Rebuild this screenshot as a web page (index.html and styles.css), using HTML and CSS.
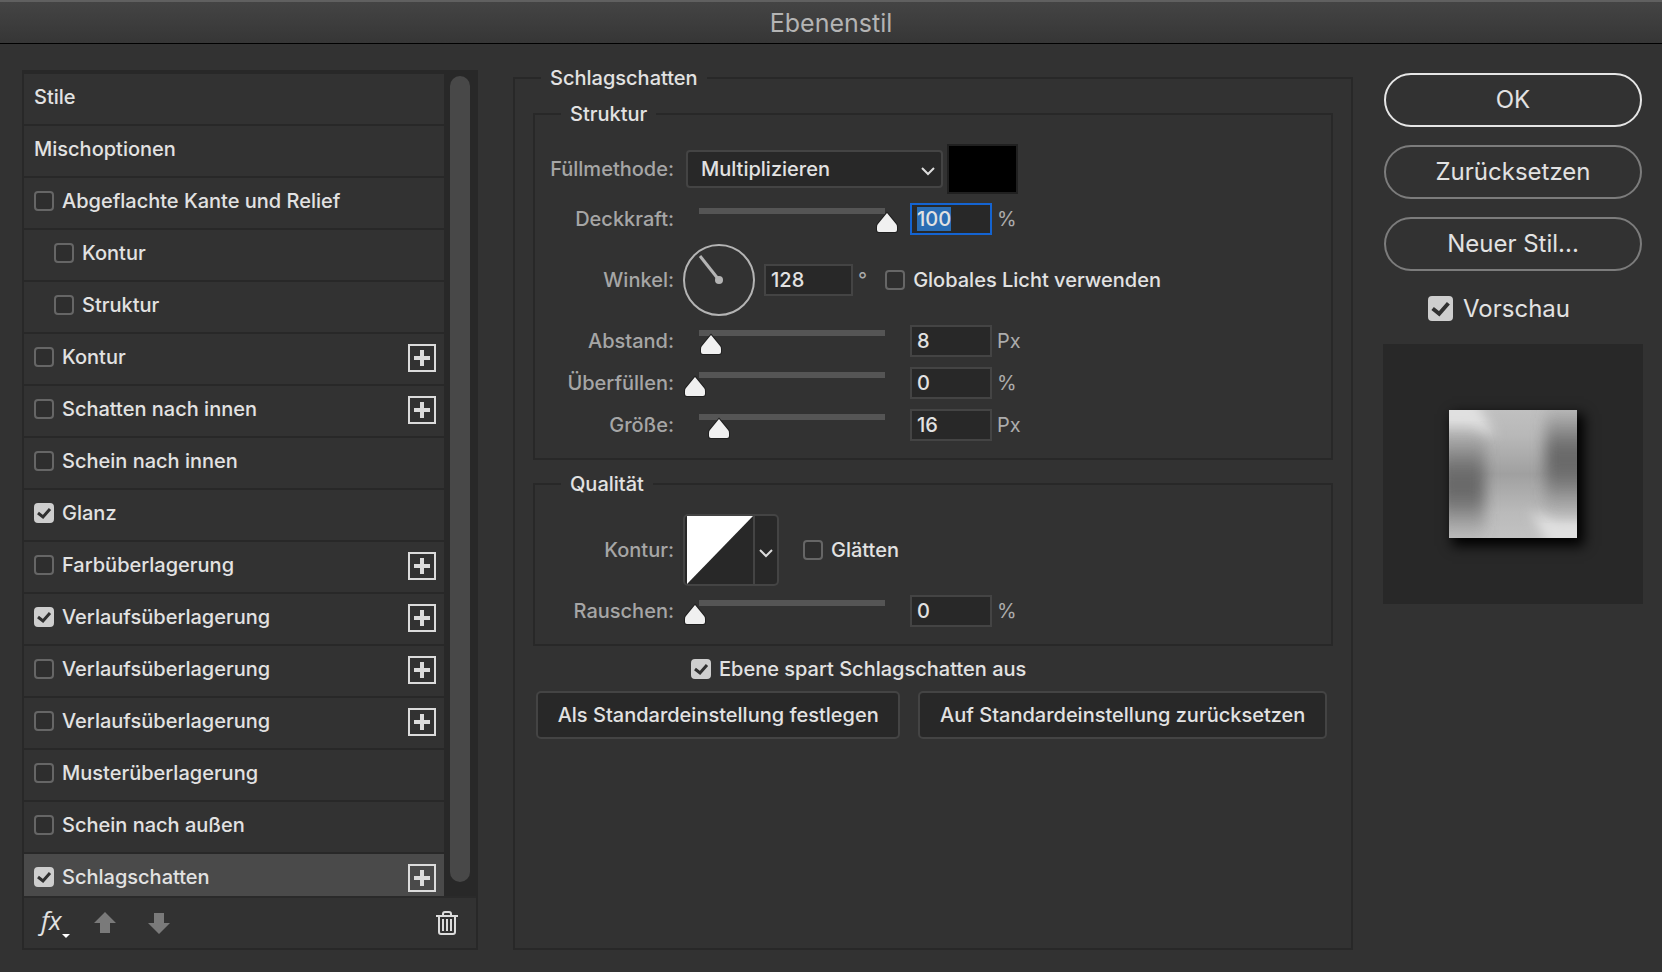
FILE: index.html
```html
<!DOCTYPE html>
<html lang="de">
<head>
    <meta charset="UTF-8">
    <meta name="viewport" content="width=device-width, initial-scale=1.0">
    <title>Ebenenstil</title>
    <link rel="stylesheet" href="styles.css">
</head>
<body>
    <header class="titlebar">
        <h1>Ebenenstil</h1>
    </header>

    <main class="dialog">
        <section class="styles-panel">
            <div class="styles-body">
                <ul class="style-list">
                    <li>Stile</li>
                    <li>Mischoptionen</li>
                    <li><label><input type="checkbox">Abgeflachte Kante und Relief</label></li>
                    <li class="sub"><label><input type="checkbox">Kontur</label></li>
                    <li class="sub"><label><input type="checkbox">Struktur</label></li>
                    <li><label><input type="checkbox">Kontur</label><button class="add-btn" aria-label="Kontur hinzufügen"></button></li>
                    <li><label><input type="checkbox">Schatten nach innen</label><button class="add-btn" aria-label="Schatten nach innen hinzufügen"></button></li>
                    <li><label><input type="checkbox">Schein nach innen</label></li>
                    <li><label><input type="checkbox" checked>Glanz</label></li>
                    <li><label><input type="checkbox">Farbüberlagerung</label><button class="add-btn" aria-label="Farbüberlagerung hinzufügen"></button></li>
                    <li><label><input type="checkbox" checked>Verlaufsüberlagerung</label><button class="add-btn" aria-label="Verlaufsüberlagerung hinzufügen"></button></li>
                    <li><label><input type="checkbox">Verlaufsüberlagerung</label><button class="add-btn" aria-label="Verlaufsüberlagerung hinzufügen"></button></li>
                    <li><label><input type="checkbox">Verlaufsüberlagerung</label><button class="add-btn" aria-label="Verlaufsüberlagerung hinzufügen"></button></li>
                    <li><label><input type="checkbox">Musterüberlagerung</label></li>
                    <li><label><input type="checkbox">Schein nach außen</label></li>
                    <li class="active"><label><input type="checkbox" checked>Schlagschatten</label><button class="add-btn" aria-label="Schlagschatten hinzufügen"></button></li>
                </ul>
                <div class="scrollbar"><div class="scroll-thumb"></div></div>
            </div>
            <div class="styles-footer">
                <button class="icon-btn fx-btn" aria-label="Effekte">
                    <span>fx</span>
                    <svg width="8" height="4" viewBox="0 0 8 4"><path d="M0 0h8L4 4z" fill="#fff"/></svg>
                </button>
                <button class="icon-btn" aria-label="Nach oben">
                    <svg width="22" height="22" viewBox="0 0 22 22">
                        <path d="M11 0L22 11H16V21H6V11H0z" fill="#7a7a7a"/>
                    </svg>
                </button>
                <button class="icon-btn" aria-label="Nach unten">
                    <svg width="22" height="22" viewBox="0 0 22 22">
                        <path d="M6 1H16V11H22L11 22L0 11H6z" fill="#7a7a7a"/>
                    </svg>
                </button>
                <button class="icon-btn trash-btn" aria-label="Löschen">
                    <svg width="22" height="24" viewBox="0 0 22 24" fill="none" stroke="#dcdcdc" stroke-width="2">
                        <path d="M0 5H22M7 5V3Q7 1 9 1H13Q15 1 15 3V5M3 5V21Q3 23 5 23H17Q19 23 19 21V5"/>
                        <path d="M7 8V20M11 8V20M15 8V20"/>
                    </svg>
                </button>
            </div>
        </section>

        <fieldset class="settings">
            <legend>Schlagschatten</legend>

            <fieldset class="group">
                <legend>Struktur</legend>
                <div class="row">
                    <label class="name" for="blend">Füllmethode:</label>
                    <select id="blend">
                        <option>Multiplizieren</option>
                        <option>Normal</option>
                    </select>
                    <button class="swatch" aria-label="Schattenfarbe"></button>
                </div>
                <div class="row">
                    <label class="name" for="opacity">Deckkraft:</label>
                    <input type="range" min="0" max="100" value="100" aria-label="Deckkraft">
                    <input type="text" class="num" id="opacity" value="100">
                    <span class="unit">%</span>
                </div>
                <div class="row">
                    <label class="name" for="angle">Winkel:</label>
                    <svg class="dial" width="72" height="72" viewBox="0 0 72 72">
                        <circle cx="36" cy="36" r="35" fill="none" stroke="#b4b4b4" stroke-width="2"/>
                        <path d="M36 36L17 12" stroke="#b4b4b4" stroke-width="3"/>
                        <circle cx="36" cy="36" r="4" fill="#b4b4b4"/>
                    </svg>
                    <input type="text" class="num wide" id="angle" value="128">
                    <span class="unit">°</span>
                    <label class="check"><input type="checkbox">Globales Licht verwenden</label>
                </div>
                <div class="distances">
                    <div class="row">
                        <label class="name" for="distance">Abstand:</label>
                        <input type="range" min="0" max="96" value="8" aria-label="Abstand">
                        <input type="text" class="num" id="distance" value="8">
                        <span class="unit">Px</span>
                    </div>
                    <div class="row">
                        <label class="name" for="spread">Überfüllen:</label>
                        <input type="range" min="0" max="100" value="0" aria-label="Überfüllen">
                        <input type="text" class="num" id="spread" value="0">
                        <span class="unit">%</span>
                    </div>
                    <div class="row">
                        <label class="name" for="size">Größe:</label>
                        <input type="range" min="0" max="128" value="16" aria-label="Größe">
                        <input type="text" class="num" id="size" value="16">
                        <span class="unit">Px</span>
                    </div>
                </div>
            </fieldset>

            <fieldset class="group">
                <legend>Qualität</legend>
                <div class="row">
                    <label class="name" for="contour">Kontur:</label>
                    <button class="contour" id="contour">
                        <svg class="curve" viewBox="0 0 66 68" preserveAspectRatio="none">
                            <path d="M0 0H66L0 68z" fill="#fff"/>
                        </svg>
                        <svg class="arrow" width="14" height="9" viewBox="0 0 14 9">
                            <path d="M1 1L7 7L13 1" fill="none" stroke="#dcdcdc" stroke-width="2"/>
                        </svg>
                    </button>
                    <label class="check"><input type="checkbox">Glätten</label>
                </div>
                <div class="row">
                    <label class="name" for="noise">Rauschen:</label>
                    <input type="range" min="0" max="100" value="0" aria-label="Rauschen">
                    <input type="text" class="num" id="noise" value="0">
                    <span class="unit">%</span>
                </div>
            </fieldset>

            <label class="knockout"><input type="checkbox" checked>Ebene spart Schlagschatten aus</label>
            <div class="defaults">
                <button>Als Standardeinstellung festlegen</button>
                <button>Auf Standardeinstellung zurücksetzen</button>
            </div>
        </fieldset>

        <aside class="actions">
            <button class="pill primary">OK</button>
            <button class="pill">Zurücksetzen</button>
            <button class="pill">Neuer Stil...</button>
            <label class="preview-check"><input type="checkbox" checked>Vorschau</label>
            <div class="preview">
                <svg class="preview-tile" width="128" height="128" viewBox="0 0 128 128">
                    <defs>
                        <linearGradient id="base" x1="0" y1="0" x2="0" y2="1">
                            <stop offset="0" stop-color="#c0c0c0"/>
                            <stop offset=".2" stop-color="#b8b8b8"/>
                            <stop offset=".5" stop-color="#a0a0a0"/>
                            <stop offset=".8" stop-color="#bababa"/>
                            <stop offset="1" stop-color="#c2c2c2"/>
                        </linearGradient>
                        <filter id="soft" x="-60%" y="-60%" width="220%" height="220%">
                            <feGaussianBlur stdDeviation="7 18"/>
                        </filter>
                        <filter id="edge" x="-50%" y="-50%" width="200%" height="200%">
                            <feGaussianBlur stdDeviation="6"/>
                        </filter>
                    </defs>
                    <rect width="128" height="128" fill="url(#base)"/>
                    <path d="M-20 -20H22L46 26L20 18H-20z" fill="#e0e0e0" filter="url(#edge)"/>
                    <path d="M148 148H106L82 102L108 110H148z" fill="#e0e0e0" filter="url(#edge)"/>
                    <rect x="-10" y="46" width="46" height="58" fill="#646464" filter="url(#soft)"/>
                    <rect x="96" y="20" width="46" height="58" fill="#646464" filter="url(#soft)"/>
                </svg>
            </div>
        </aside>
    </main>

    <script>
        const opacity = document.getElementById('opacity');
        opacity.focus();
        opacity.select();
    </script>
</body>
</html>
```
FILE: styles.css
```css
* {
    box-sizing: border-box;
}
body {
    margin: 0;
    height: 100vh;
    display: flex;
    flex-direction: column;
    background-color: #323232;
    color: #e2e2e2;
    font-family: Inter, "Liberation Sans", sans-serif;
    font-size: 20px;
    font-weight: 500;
    line-height: 24px;
}
button, input, select {
    font: inherit;
    color: inherit;
    margin: 0;
}
button {
    cursor: pointer;
}
fieldset {
    margin: 0;
    min-width: 0;
    border: 2px solid #282828;
}
legend {
    padding: 0 9px;
}

/* Title bar */
.titlebar {
    height: 44px;
    flex: none;
    display: flex;
    align-items: center;
    justify-content: center;
    border-top: 2px solid #606060;
    border-bottom: 1px solid #000;
    background: linear-gradient(#444, #363636);
}
.titlebar h1 {
    margin: 0;
    font-size: 25px;
    font-weight: 400;
    color: #b4b4b4;
}

.dialog {
    flex: 1;
    min-height: 0;
    display: grid;
    grid-template-columns: 456px minmax(0, 1fr) 260px;
    grid-template-rows: minmax(0, 1fr);
    padding: 22px 19px 22px 22px;
}

/* Checkboxes */
input[type="checkbox"] {
    appearance: none;
    flex: none;
    width: 20px;
    height: 20px;
    border: 2px solid #666;
    border-radius: 4px;
    background-color: #2e2e2e;
}
input[type="checkbox"]:checked {
    border-color: #cecece;
    background: #cecece url("data:image/svg+xml,%3Csvg xmlns='http://www.w3.org/2000/svg' viewBox='0 0 16 16'%3E%3Cpath d='M2 8L7 12L14 4' fill='none' stroke='%23303030' stroke-width='3'/%3E%3C/svg%3E") center / 100% no-repeat;
}

/* Style list */
.styles-panel {
    margin-top: 4px;
    display: flex;
    flex-direction: column;
    border: 2px solid #282828;
}
.styles-body {
    flex: 1;
    min-height: 0;
    display: flex;
    padding-top: 2px;
    background-color: #282828;
}
.style-list {
    flex: 1;
    margin: 0;
    padding: 0;
    list-style: none;
    overflow: hidden;
}
.style-list li {
    display: flex;
    align-items: center;
    height: 52px;
    padding: 0 8px 4px 10px;
    border-bottom: 2px solid #282828;
    background-color: #323232;
}
.style-list li.sub {
    padding-left: 30px;
}
.style-list li.active {
    background-color: #4a4a4a;
}
.style-list label {
    flex: 1;
    display: flex;
    align-items: center;
    gap: 8px;
}
.add-btn {
    width: 28px;
    height: 28px;
    margin-top: 2px;
    padding: 0;
    border: 2px solid #dcdcdc;
    background:
        linear-gradient(#dcdcdc, #dcdcdc) center / 16px 4px no-repeat,
        linear-gradient(#dcdcdc, #dcdcdc) center / 4px 16px no-repeat;
}
.scrollbar {
    width: 32px;
    padding: 2px 6px 14px;
}
.scroll-thumb {
    width: 20px;
    height: 100%;
    border-radius: 10px;
    background-color: #484848;
}
.styles-footer {
    height: 52px;
    flex: none;
    display: flex;
    align-items: center;
    gap: 32px;
    padding: 0 18px 0 16px;
    border-top: 2px solid #2a2a2a;
}
.icon-btn {
    display: flex;
    padding: 0;
    border: none;
    background: none;
}
.fx-btn {
    align-items: flex-end;
    width: 38px;
    margin-right: -16px;
}
.fx-btn span {
    padding: 0 0 6px 1px;
    font-family: "Open Sans", sans-serif;
    font-style: italic;
    font-size: 26px;
    font-weight: 400;
    line-height: 24px;
}
.trash-btn {
    margin-left: auto;
}

/* Settings */
.settings {
    margin: 0 30px 0 35px;
    padding: 12px 18px;
}
.settings > legend {
    margin-left: 8px;
}
.group {
    padding: 18px 8px 17px;
}
.group + .group {
    margin-top: 12px;
}
.group legend {
    margin-left: 18px;
}
.row {
    display: flex;
    align-items: center;
}
.row + .row {
    margin-top: 9px;
}
.distances {
    display: grid;
    gap: 10px;
    margin-top: 9px;
}
.distances .row {
    margin-top: 0;
}
.name {
    width: 131px;
    margin-right: 9px;
    text-align: right;
    white-space: nowrap;
    color: #a6a6a6;
}
.unit {
    margin-left: 5px;
    font-weight: 400;
    color: #acacac;
}
select {
    appearance: none;
    width: 257px;
    height: 38px;
    margin-left: 3px;
    padding: 0 13px;
    border: 2px solid #444;
    border-radius: 4px;
    background: #282828 url("data:image/svg+xml,%3Csvg xmlns='http://www.w3.org/2000/svg' width='14' height='9'%3E%3Cpath d='M1 1L7 7L13 1' fill='none' stroke='%23dcdcdc' stroke-width='2'/%3E%3C/svg%3E") right 6px top 15px no-repeat;
}
.swatch {
    width: 71px;
    height: 50px;
    margin-left: 4px;
    border: 2px solid #202020;
    background-color: #000;
}
.num {
    width: 82px;
    height: 32px;
    margin-left: 11px;
    padding: 0 5px;
    border: 2px solid #444;
    background-color: #282828;
}
.num.wide {
    width: 89px;
    margin-left: 9px;
}
.num:focus {
    outline: none;
    border-color: #1464d2;
}
.num::selection {
    background-color: #2a6db4;
    color: #e2e2e2;
}
input[type="range"] {
    appearance: none;
    width: 216px;
    height: 32px;
    background: none;
}
input[type="range"]::-webkit-slider-runnable-track {
    height: 32px;
    background: linear-gradient(#555, #555) 16px 5px / 186px 6px no-repeat;
}
input[type="range"]::-webkit-slider-thumb {
    appearance: none;
    width: 24px;
    height: 24px;
    margin-top: 8px;
    background: url("data:image/svg+xml,%3Csvg xmlns='http://www.w3.org/2000/svg' width='24' height='24'%3E%3Cpath d='M12 2L21 13Q22 14 22 16V19Q22 21 20 21H4Q2 21 2 19V16Q2 14 3 13z' fill='%23f0f0f0' stroke='%23202020' stroke-width='2' paint-order='stroke'/%3E%3C/svg%3E") no-repeat;
}
.dial {
    flex: none;
}
.check {
    display: flex;
    align-items: center;
    gap: 8px;
    margin-left: 18px;
}
.contour {
    display: flex;
    align-items: center;
    width: 96px;
    height: 72px;
    padding: 0 0 0 2px;
    border: 2px solid #444;
    border-radius: 5px;
    background-color: #282828;
}
.contour .curve {
    width: 68px;
    height: 68px;
    border-right: 2px solid #444;
}
.contour .arrow {
    margin: 6px auto 0;
}
.contour + .check {
    margin-left: 24px;
}
.knockout {
    display: flex;
    align-items: center;
    gap: 8px;
    margin: 11px 0 10px 158px;
}
.defaults {
    display: flex;
    gap: 18px;
    margin: 0 6px 0 3px;
}
.defaults button {
    flex: 1 1 auto;
    height: 48px;
    padding: 0;
    border: 2px solid #444;
    border-radius: 5px;
    background-color: #282828;
}

/* Right column */
.actions {
    display: flex;
    flex-direction: column;
    gap: 18px;
    padding-top: 7px;
    font-size: 24px;
    font-weight: 400;
}
.pill {
    height: 54px;
    margin: 0 1px;
    border: 2px solid #7c7c7c;
    border-radius: 27px;
    background: none;
}
.pill.primary {
    border-color: #e6e6e6;
}
.preview-check {
    display: flex;
    align-items: center;
    justify-content: center;
    gap: 10px;
    margin: 7px 28px 5px 0;
}
.preview-check input[type="checkbox"] {
    width: 25px;
    height: 25px;
}
.preview {
    height: 260px;
    display: flex;
    align-items: center;
    justify-content: center;
    background-color: #282828;
}
.preview-tile {
    box-shadow: 5px 6px 12px 2px #000;
}
```
